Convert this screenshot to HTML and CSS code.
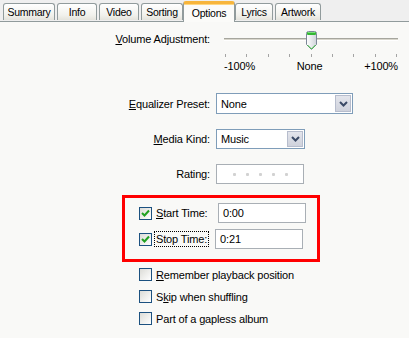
FILE: index.html
```html
<!DOCTYPE html>
<html lang="en">
<head>
    <meta charset="UTF-8">
    <title>Get Info - Options</title>
    <link rel="stylesheet" href="styles.css">
</head>
<body>
    <div class="tabs">
        <div class="tab t-summary">Summary</div>
        <div class="tab t-info">Info</div>
        <div class="tab t-video">Video</div>
        <div class="tab t-sorting">Sorting</div>
        <div class="tab t-options active">Options</div>
        <div class="tab t-lyrics">Lyrics</div>
        <div class="tab t-artwork">Artwork</div>
    </div>
    <div class="panel">
        <div class="vol-row">
            <span class="lbl"><u>V</u>olume Adjustment:</span>
            <div class="slider">
                <div class="track">
                    <svg class="thumb" width="11" height="20" viewBox="0 0 11 20">
                        <defs>
                            <linearGradient id="tg" x1="0" y1="0" x2="1" y2="0">
                                <stop offset="0" stop-color="#ffffff"/>
                                <stop offset="1" stop-color="#cfd3da"/>
                            </linearGradient>
                        </defs>
                        <path d="M0.5,2.5 Q0.5,0.5 2.5,0.5 H8.5 Q10.5,0.5 10.5,2.5 V13.5 L5.5,18.5 L0.5,13.5 Z" fill="url(#tg)" stroke="#7c8797"/>
                        <rect x="1" y="1" width="9" height="3" rx="1" fill="#34b834"/>
                        <rect x="2" y="1" width="7" height="1" fill="#7be07b"/>
                        <path d="M1.5,14 L5.5,18 L9.5,14" fill="none" stroke="#3cbf3c"/>
                    </svg>
                </div>
                <div class="ticks">
                    <i></i><i></i><i></i><i></i><i></i><i></i><i></i><i></i><i></i>
                </div>
                <div class="scale">
                    <span>-100%</span>
                    <span>None</span>
                    <span>+100%</span>
                </div>
            </div>
        </div>

        <div class="row row-eq">
            <span class="lbl"><u>E</u>qualizer Preset:</span>
            <div class="select sel-eq">
                <span class="val">None</span>
                <span class="drop">
                    <svg width="9" height="6" viewBox="0 0 9 6"><polyline points="1,1 4.5,4.5 8,1" fill="none" stroke="#3b4a66" stroke-width="2"/></svg>
                </span>
            </div>
        </div>

        <div class="row row-kind">
            <span class="lbl"><u>M</u>edia Kind:</span>
            <div class="select sel-kind">
                <span class="val">Music</span>
                <span class="drop">
                    <svg width="9" height="6" viewBox="0 0 9 6"><polyline points="1,1 4.5,4.5 8,1" fill="none" stroke="#3b4a66" stroke-width="2"/></svg>
                </span>
            </div>
        </div>

        <div class="row row-rating">
            <span class="lbl">Rating:</span>
            <div class="rating">
                <i></i><i></i><i></i><i></i><i></i>
            </div>
        </div>

        <div class="highlight">
            <div class="crow">
                <span class="check on">
                    <svg width="9" height="9" viewBox="0 0 9 9"><polyline points="1,4 3.5,6.5 8,1.5" fill="none" stroke="#21a121" stroke-width="2"/></svg>
                </span>
                <span class="clbl"><u>S</u>tart Time:</span>
                <div class="field">0:00</div>
            </div>
            <div class="crow">
                <span class="check on">
                    <svg width="9" height="9" viewBox="0 0 9 9"><polyline points="1,4 3.5,6.5 8,1.5" fill="none" stroke="#21a121" stroke-width="2"/></svg>
                </span>
                <span class="clbl focus">Stop Time:</span>
                <div class="field">0:21</div>
            </div>
        </div>

        <div class="opts">
            <div class="opt"><span class="check"></span><span><u>R</u>emember playback position</span></div>
            <div class="opt"><span class="check"></span><span>S<u>k</u>ip when shuffling</span></div>
            <div class="opt"><span class="check"></span><span>Part of a <u>g</u>apless album</span></div>
        </div>
    </div>
</body>
</html>
```

FILE: styles.css
```css
body {
    margin: 0;
    width: 409px;
    height: 338px;
    overflow: hidden;
    font-family: "Liberation Sans", Arial, sans-serif;
    font-size: 11px;
    letter-spacing: -0.15px;
    color: #000;
    background: #f9f9f7;
}
u {
    text-decoration: underline;
    text-underline-offset: 1px;
}

/* tab strip */
.tabs {
    display: flex;
    align-items: flex-end;
    height: 21px;
    padding-left: 3px;
    background: #efefef;
    border-bottom: 1px solid #919b9c;
}
.tab {
    height: 17px;
    line-height: 17px;
    text-align: center;
    font-size: 10.5px;
    letter-spacing: -0.25px;
    white-space: nowrap;
    box-sizing: border-box;
    border: 1px solid #919b9c;
    border-bottom: none;
    border-radius: 3px 3px 0 0;
    background: linear-gradient(#ffffff, #f1f1ec 70%, #e4e3dc);
    margin-right: 2px;
    margin-bottom: 1px;
}
.t-summary { width: 52px; }
.t-info { width: 40px; }
.t-video { width: 40px; }
.t-sorting { width: 42px; margin-right: 0; }
.t-options { width: 52px; margin-right: 0; }
.t-lyrics { width: 38px; }
.t-artwork { width: 46px; }
.tab.active {
    height: 21px;
    line-height: 19px;
    margin-bottom: -1px;
    background: #fbfbf9;
    border-top: 3px solid #f7b53c;
    box-shadow: inset 0 1px 0 #ffd680;
}

/* panel */
.panel {
    display: flex;
    flex-direction: column;
}
.lbl {
    width: 210px;
    text-align: right;
    flex-shrink: 0;
}

/* volume slider */
.vol-row {
    display: flex;
    margin-top: 9px;
}
.vol-row .lbl {
    margin-top: 1px;
    line-height: 14px;
}
.slider {
    margin-left: 14px;
    width: 174px;
}
.track {
    position: relative;
    height: 20px;
}
.track::before {
    content: "";
    display: block;
    position: relative;
    top: 7px;
    height: 1px;
    border-top: 1px solid #a6a69e;
    border-bottom: 1px solid #ffffff;
    background: #d8d6cc;
}
.thumb {
    position: absolute;
    left: 82px;
    top: 0;
}
.ticks {
    display: flex;
    justify-content: space-between;
    margin-top: 3px;
    padding: 0 1px;
}
.ticks i {
    width: 1px;
    height: 3px;
    background: #a4a4a4;
}
.scale {
    display: flex;
    justify-content: space-between;
    margin-top: 3px;
    line-height: 13px;
}

/* label + control rows */
.row {
    display: flex;
    align-items: center;
}
.row .lbl {
    margin-right: 6px;
}
.row-eq { margin-top: 20px; }
.row-kind { margin-top: 15px; }
.row-rating { margin-top: 15px; }

.select {
    display: flex;
    align-items: center;
    box-sizing: border-box;
    border: 1px solid #7f9db9;
    background: #fff;
    padding: 1px;
}
.sel-eq { width: 137px; height: 21px; }
.sel-kind { width: 89px; height: 20px; }
.select .val {
    flex: 1;
    padding-left: 3px;
}
.drop {
    display: flex;
    align-items: center;
    justify-content: center;
    width: 16px;
    height: 100%;
    box-sizing: border-box;
    border: 1px solid #b7bdcd;
    background: linear-gradient(#e3e5ec, #cfd2dc);
}

.rating {
    display: flex;
    align-items: center;
    gap: 10px;
    box-sizing: border-box;
    width: 88px;
    height: 20px;
    padding-left: 16px;
    border: 1px solid #a9afb5;
    background: #fff;
}
.rating i {
    width: 3px;
    height: 3px;
    border-radius: 1px;
    background: #d2d2d2;
}

/* red highlight box */
.highlight {
    margin-top: 11px;
    margin-left: 122px;
    width: 198px;
    box-sizing: border-box;
    border: 3px solid #ff0000;
    padding: 5px 0 10px 14px;
    display: flex;
    flex-direction: column;
    gap: 6px;
}
.crow {
    display: flex;
    align-items: center;
}
.check {
    display: flex;
    align-items: center;
    justify-content: center;
    width: 13px;
    height: 13px;
    box-sizing: border-box;
    border: 1px solid #1c5180;
    background: linear-gradient(135deg, #dcdcd7, #ffffff);
    flex-shrink: 0;
}
.clbl {
    width: 59px;
    margin-left: 2px;
    margin-right: 2px;
    padding-left: 1px;
    line-height: 14px;
    border: 1px dotted transparent;
}
.clbl.focus {
    width: auto;
    margin-right: 6px;
    padding-right: 1px;
    border-color: #000;
}
.field {
    width: 88px;
    height: 20px;
    line-height: 18px;
    box-sizing: border-box;
    border: 1px solid #a9afb5;
    background: #fff;
    padding-left: 4px;
}

/* plain options */
.opts {
    display: flex;
    flex-direction: column;
    margin-top: 6px;
    margin-left: 139px;
    gap: 9px;
}
.opt {
    display: flex;
    align-items: center;
    gap: 4px;
}
```
